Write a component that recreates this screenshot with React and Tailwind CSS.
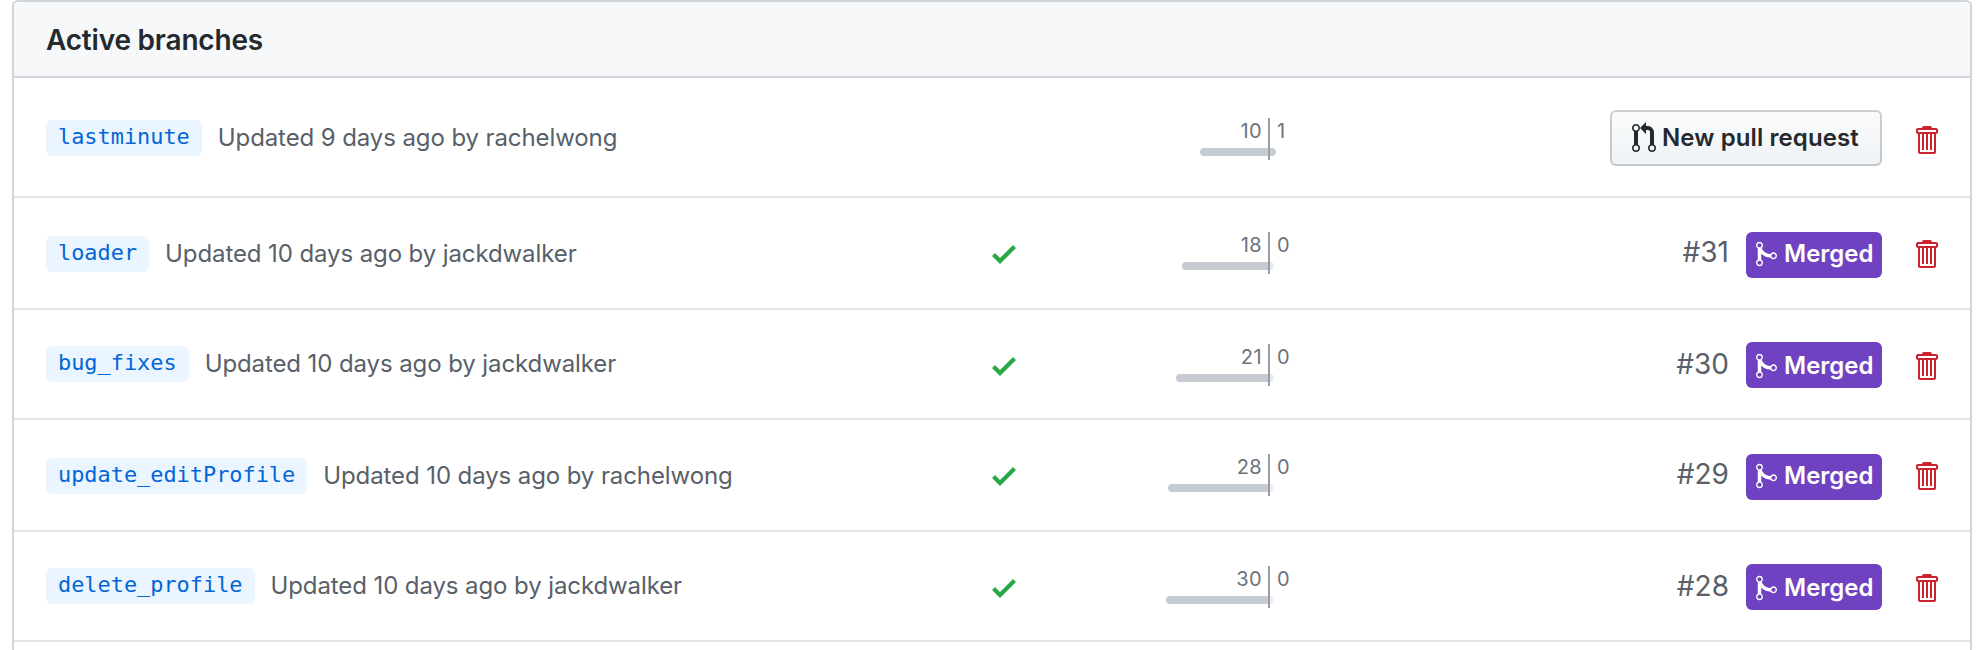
const PATHS = {
  check: 'M12 5l-8 8-4-4 1.5-1.5L4 10l6.5-6.5L12 5z',
  trash:
    'M11 2H9c0-.55-.45-1-1-1H5c-.55 0-1 .45-1 1H2c-.55 0-1 .45-1 1v1c0 .55.45 1 1 1v9c0 .55.45 1 1 1h7c.55 0 1-.45 1-1V5c.55 0 1-.45 1-1V3c0-.55-.45-1-1-1zm-1 12H3V5h1v8h1V5h1v8h1V5h1v8h1V5h1v9zm1-10H2V3h9v1z',
  merge:
    'M10 7c-.73 0-1.38.41-1.73 1.02V8C7.22 7.98 6 7.64 5.14 6.98c-.75-.58-1.5-1.61-1.89-2.44A1.993 1.993 0 0 0 2 .99C.89.99 0 1.89 0 3a2 2 0 0 0 1 1.72v6.56c-.6.35-1 .99-1 1.72 0 1.11.89 2 2 2a1.993 1.993 0 0 0 1-3.72V7.67c.67.7 1.44 1.27 2.3 1.69.86.42 2.03.63 2.97.64v-.02c.36.61 1 1.02 1.73 1.02 1.11 0 2-.89 2-2 0-1.11-.89-2-2-2zm-6.8 6c0 .66-.55 1.2-1.2 1.2-.65 0-1.2-.55-1.2-1.2 0-.65.55-1.2 1.2-1.2.65 0 1.2.55 1.2 1.2zM2 4.2C1.34 4.2.8 3.65.8 3c0-.65.55-1.2 1.2-1.2.65 0 1.2.55 1.2 1.2 0 .65-.55 1.2-1.2 1.2zm8 6c-.66 0-1.2-.55-1.2-1.2 0-.65.55-1.2 1.2-1.2.65 0 1.2.55 1.2 1.2 0 .65-.55 1.2-1.2 1.2z',
  pull:
    'M11 11.28V5c-.03-.78-.34-1.47-.94-2.06C9.46 2.35 8.78 2.03 8 2H7V0L4 3l3 3V4h1c.27.02.48.11.69.31.21.2.3.42.31.69v6.28A1.993 1.993 0 0 0 10 15a1.993 1.993 0 0 0 1-3.72zm-1 2.92c-.66 0-1.2-.55-1.2-1.2 0-.65.55-1.2 1.2-1.2.65 0 1.2.55 1.2 1.2 0 .65-.55 1.2-1.2 1.2zM4 3c0-1.11-.89-2-2-2a1.993 1.993 0 0 0-1 3.72v6.56A1.993 1.993 0 0 0 2 15a1.993 1.993 0 0 0 1-3.72V4.72c.59-.34 1-.98 1-1.72zm-.8 10c0 .66-.55 1.2-1.2 1.2-.65 0-1.2-.55-1.2-1.2 0-.65.55-1.2 1.2-1.2.65 0 1.2.55 1.2 1.2zM2 4.2C1.34 4.2.8 3.65.8 3c0-.65.55-1.2 1.2-1.2.65 0 1.2.55 1.2 1.2 0 .65-.55 1.2-1.2 1.2z',
};

function Icon({ name, className }) {
  return (
    <svg viewBox="0 0 12 16" fill="currentColor" aria-hidden="true" className={`block shrink-0 ${className}`}>
      <path fillRule="evenodd" d={PATHS[name]} />
    </svg>
  );
}

const BRANCHES = [
  { name: 'lastminute', days: 9, user: 'rachelwong', behind: 10, ahead: 1, bar: 68, row: 'h-[120px]', chip: 'mt-[42px]' },
  { name: 'loader', days: 10, user: 'jackdwalker', behind: 18, ahead: 0, bar: 86, pr: 31, row: 'h-[112px]', chip: 'mt-[38px]', badge: 'mt-[34px] pt-[6px]' },
  { name: 'bug_fixes', days: 10, user: 'jackdwalker', behind: 21, ahead: 0, bar: 92, pr: 30, row: 'h-[110px]', chip: 'mt-[36px]', badge: 'mt-[32px] pt-[8px]' },
  { name: 'update_editProfile', days: 10, user: 'rachelwong', behind: 28, ahead: 0, bar: 100, pr: 29, row: 'h-[112px]', chip: 'mt-[38px]', badge: 'mt-[34px] pt-[6px]' },
  { name: 'delete_profile', days: 10, user: 'jackdwalker', behind: 30, ahead: 0, bar: 102, pr: 28, row: 'h-[110px]', chip: 'mt-[36px]', badge: 'mt-[32px] pt-[8px]' },
];

function Divergence({ branch }) {
  return (
    <div className={`flex h-[42px] text-[20px] leading-[26px] tracking-[0.4px] text-[#6a737d] ${branch.pr ? 'mt-[34px]' : 'mt-[40px]'}`}>
      <div className="flex w-[168px] flex-col items-end gap-1">
        <span className="pr-[6px]">{branch.behind}</span>
        <span className="h-2 rounded-l-[4px] bg-[#c6cbd1]" style={{ width: branch.bar }} />
      </div>
      <div className="w-[2px] bg-[#959da5]" />
      <div className="flex flex-col items-start gap-1">
        <span className="pl-[7px]">{branch.ahead}</span>
        <span className={`h-2 rounded-r-[4px] ${branch.ahead ? 'w-[6px] bg-[#c6cbd1]' : 'w-[4px] bg-[#eaecef]'}`} />
      </div>
    </div>
  );
}

function BranchRow({ branch }) {
  return (
    <div className={`grid grid-cols-[978px_108px_300px_1fr] items-start border-b-2 border-[#e1e4e8] ${branch.row}`}>
      <div className={`flex items-start pl-8 whitespace-nowrap ${branch.chip}`}>
        <span className="h-9 rounded-[6px] bg-[#eaf5ff] px-3 font-['DejaVu_Sans_Mono',monospace] text-[21.9px] leading-[33px] text-[#0366d6]">
          {branch.name}
        </span>
        <span className="ml-4 text-[24px] leading-[35px] tracking-[-0.1px] text-[#586069]">
          Updated {branch.days} days ago by {branch.user}
        </span>
      </div>
      <div className="pt-[40px]">
        {branch.pr && <Icon name="check" className="h-8 w-6 text-[#28a745]" />}
      </div>
      <Divergence branch={branch} />
      <div className="flex items-start justify-end pr-8">
        {branch.pr ? (
          <>
            <span className="mt-[42px] mr-[17px] text-[28px] leading-[24px] text-[#586069]">#{branch.pr}</span>
            <span className={`flex h-[46px] w-[136px] items-start rounded-[6px] bg-[#6f42c1] pl-[10px] text-white ${branch.badge}`}>
              <Icon name="merge" className="mt-[2px] h-[28px] w-[21px]" />
              <span className="ml-[7px] text-[24px] leading-[32px] font-semibold">Merged</span>
            </span>
          </>
        ) : (
          <button className="mt-8 flex h-14 w-[272px] items-start rounded-[6px] border-2 border-[#1b1f23]/20 bg-linear-to-b from-[#fafbfc] to-[#eff3f6] bg-origin-border pt-[10px] pl-5 text-[24px] leading-[32px] font-semibold tracking-[0.1px] whitespace-nowrap text-[#24292e]">
            <Icon name="pull" className="h-8 w-6" />
            <span className="ml-[6px]">New pull request</span>
          </button>
        )}
        <Icon name="trash" className={`ml-8 h-8 w-6 text-[#cb2431] ${branch.pr ? 'mt-[40px]' : 'mt-[46px]'}`} />
      </div>
    </div>
  );
}

export default function App() {
  return (
    <main className="h-[650px] overflow-hidden bg-white pr-2 pl-3 font-['Inter',sans-serif]">
      <section className="h-[700px] w-[1960px] rounded-[6px] border-2 border-[#d1d5da]">
        <h2 className="h-[76px] rounded-t-[4px] border-b-2 border-[#d1d5da] bg-[#f6f8fa] pl-8 text-[28px] leading-[76px] font-semibold tracking-[-0.2px] text-[#24292e]">
          Active branches
        </h2>
        {BRANCHES.map((branch) => (
          <BranchRow key={branch.name} branch={branch} />
        ))}
      </section>
    </main>
  );
}
